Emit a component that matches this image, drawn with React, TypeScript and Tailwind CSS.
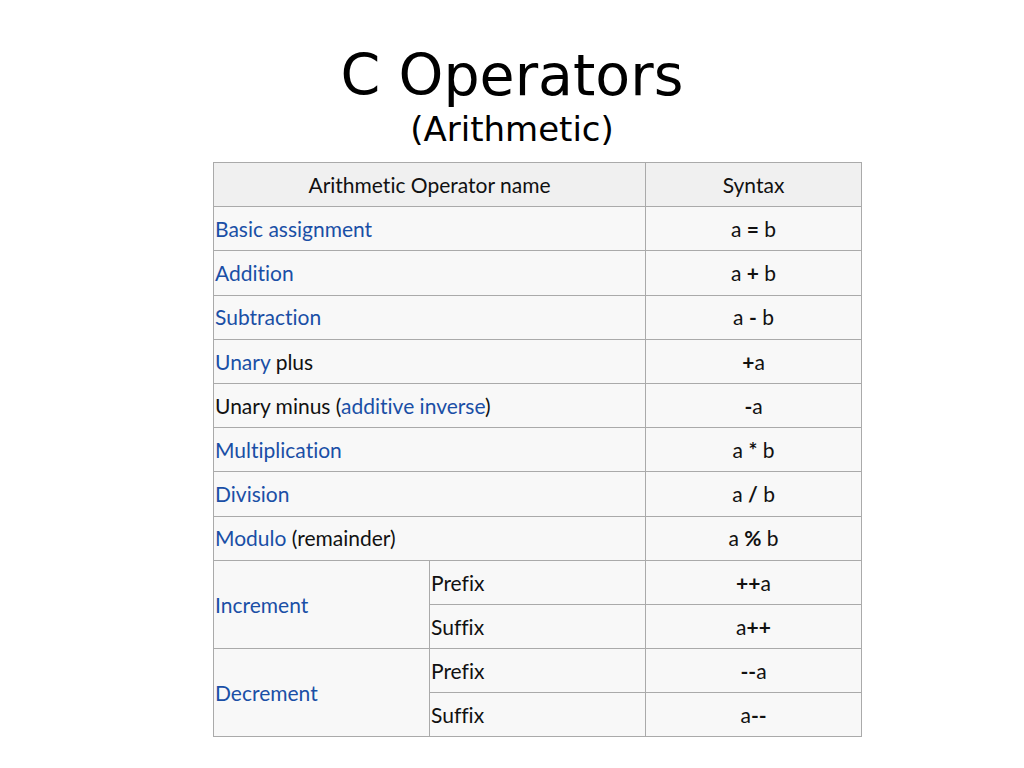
import React from 'react';

const link = 'text-[#1a4fa6]';

function Cell({
  children,
  className = '',
  rowSpan,
  colSpan,
}: {
  children?: React.ReactNode;
  className?: string;
  rowSpan?: number;
  colSpan?: number;
}) {
  return (
    <td
      rowSpan={rowSpan}
      colSpan={colSpan}
      className={`border border-[#aaaaaa] h-[44.2px] px-[1px] align-middle ${className}`}
    >
      {children}
    </td>
  );
}

function Syn({ children }: { children: React.ReactNode }) {
  return <Cell className="text-center">{children}</Cell>;
}

export default function App() {
  return (
    <div className="w-[1024px] h-[768px] bg-white flex flex-col">
      {/* Title */}
      <div className="mt-[40px] text-center font-['DejaVu_Sans',sans-serif] text-black">
        <h1 className="text-[57px] leading-[70px]">C Operators</h1>
        <h2 className="text-[34px] leading-[38px]">(Arithmetic)</h2>
      </div>

      {/* Table */}
      <table className="ml-[213px] mt-[14px] w-[649px] table-fixed border-collapse bg-[#f8f8f8] font-['Lato',sans-serif] text-[21px] text-[#111111] [font-variant-ligatures:none]">
        <colgroup>
          <col className="w-[216px]" />
          <col className="w-[216px]" />
          <col className="w-[216px]" />
        </colgroup>
        <thead>
          <tr className="bg-[#f0f0f0]">
            <th colSpan={2} className="border border-[#aaaaaa] h-[44.2px] font-normal text-center">
              Arithmetic Operator name
            </th>
            <th className="border border-[#aaaaaa] h-[44.2px] font-normal text-center">Syntax</th>
          </tr>
        </thead>
        <tbody>
          <tr>
            <Cell colSpan={2} className={link}>Basic assignment</Cell>
            <Syn>a <b>=</b> b</Syn>
          </tr>
          <tr>
            <Cell colSpan={2} className={link}>Addition</Cell>
            <Syn>a <b>+</b> b</Syn>
          </tr>
          <tr>
            <Cell colSpan={2} className={link}>Subtraction</Cell>
            <Syn>a <b>-</b> b</Syn>
          </tr>
          <tr>
            <Cell colSpan={2}>
              <span className={link}>Unary</span> plus
            </Cell>
            <Syn><b>+</b>a</Syn>
          </tr>
          <tr>
            <Cell colSpan={2}>
              Unary minus (<span className={link}>additive inverse</span>)
            </Cell>
            <Syn><b>-</b>a</Syn>
          </tr>
          <tr>
            <Cell colSpan={2} className={link}>Multiplication</Cell>
            <Syn>a <b>*</b> b</Syn>
          </tr>
          <tr>
            <Cell colSpan={2} className={link}>Division</Cell>
            <Syn>a <b>/</b> b</Syn>
          </tr>
          <tr>
            <Cell colSpan={2}>
              <span className={link}>Modulo</span> (remainder)
            </Cell>
            <Syn>a <b>%</b> b</Syn>
          </tr>
          <tr>
            <Cell rowSpan={2} className={link}>Increment</Cell>
            <Cell>Prefix</Cell>
            <Syn><b>++</b>a</Syn>
          </tr>
          <tr>
            <Cell>Suffix</Cell>
            <Syn>a<b>++</b></Syn>
          </tr>
          <tr>
            <Cell rowSpan={2} className={link}>Decrement</Cell>
            <Cell>Prefix</Cell>
            <Syn><b>--</b>a</Syn>
          </tr>
          <tr>
            <Cell>Suffix</Cell>
            <Syn>a<b>--</b></Syn>
          </tr>
        </tbody>
      </table>
    </div>
  );
}
